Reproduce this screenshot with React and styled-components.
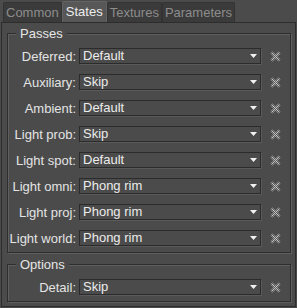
import styled, { createGlobalStyle } from "styled-components";

const Global = createGlobalStyle`
  html, body {
    margin: 0;
    padding: 0;
    background: #4b4b4b;
  }
  body {
    font-family: "Liberation Sans", Arial, sans-serif;
    font-size: 13px;
    color: #e6e6e6;
  }
`;

const passes = [
  ["Deferred:", "Default"],
  ["Auxiliary:", "Skip"],
  ["Ambient:", "Default"],
  ["Light prob:", "Skip"],
  ["Light spot:", "Default"],
  ["Light omni:", "Phong rim"],
  ["Light proj:", "Phong rim"],
  ["Light world:", "Phong rim"],
];

const tabs = ["Common", "States", "Textures", "Parameters"];

function ClearIcon() {
  return (
    <ClearBtn>
      <svg width="11" height="11" viewBox="0 0 11 11">
        <defs>
          <pattern id="chk" width="2" height="2" patternUnits="userSpaceOnUse">
            <rect width="2" height="2" fill="#5e5e5e" />
            <rect width="1" height="1" fill="#c4c4c4" />
            <rect x="1" y="1" width="1" height="1" fill="#c4c4c4" />
          </pattern>
        </defs>
        <path d="M1.5 1.5L9.5 9.5M9.5 1.5L1.5 9.5" stroke="url(#chk)" strokeWidth="2.6" />
      </svg>
    </ClearBtn>
  );
}

function Combo({ value }) {
  return (
    <ComboBox>
      <span>{value}</span>
      <svg width="7" height="4" viewBox="0 0 7 4">
        <path d="M0 0h7L3.5 4z" fill="#f2f2f2" />
      </svg>
    </ComboBox>
  );
}

export default function App() {
  return (
    <Window>
      <Global />
      <TabBar>
        {tabs.map((t) => (
          <Tab key={t} $active={t === "States"}>
            {t}
          </Tab>
        ))}
      </TabBar>
      <Panel>
        <Group>
          <GroupTitle>Passes</GroupTitle>
          <Rows>
            {passes.map(([label, value]) => (
              <Row key={label}>
                <Label>{label}</Label>
                <Combo value={value} />
                <ClearIcon />
              </Row>
            ))}
          </Rows>
        </Group>
        <Group>
          <GroupTitle>Options</GroupTitle>
          <Rows>
            <Row>
              <Label>Detail:</Label>
              <Combo value="Skip" />
              <ClearIcon />
            </Row>
          </Rows>
        </Group>
      </Panel>
    </Window>
  );
}

const Window = styled.div`
  width: 297px;
  height: 308px;
  background: #4b4b4b;
  overflow: hidden;
`;

const TabBar = styled.div`
  display: flex;
  align-items: flex-end;
  height: 22px;
  padding-left: 3px;
`;

const Tab = styled.div`
  box-sizing: border-box;
  height: ${(p) => (p.$active ? "21px" : "20px")};
  line-height: 19px;
  padding: 0 2px;
  min-width: 45px;
  text-align: center;
  border-radius: 2px 2px 0 0;
  background: ${(p) => (p.$active ? "#575757" : "#3b3b3b")};
  color: ${(p) => (p.$active ? "#ededed" : "#8d8d8d")};
  border: 1px solid ${(p) => (p.$active ? "#646464" : "#333333")};
  border-bottom: none;
`;

const Panel = styled.div`
  box-sizing: border-box;
  height: 285px;
  margin: 0 1px;
  border: 1px solid #2d2d2d;
  padding: 10px 4px 0 5px;
  display: flex;
  flex-direction: column;
  gap: 11px;
`;

const Group = styled.div`
  position: relative;
  border: 1px solid #2e2e2e;
  box-shadow: inset 1px 1px 0 #5f5f5f, 1px 1px 0 #5f5f5f;
  padding: 14px 0 6px 0;
`;

const GroupTitle = styled.span`
  position: absolute;
  top: -8px;
  left: 8px;
  padding: 0 4px;
  line-height: 15px;
  background: #4b4b4b;
  color: #e6e6e6;
`;

const Rows = styled.div`
  display: flex;
  flex-direction: column;
  gap: 10px;
`;

const Row = styled.div`
  display: grid;
  grid-template-columns: 68px 182px 1fr;
  column-gap: 3px;
  align-items: center;
  height: 16px;
`;

const Label = styled.div`
  text-align: right;
  white-space: nowrap;
  color: #e4e4e4;
`;

const ComboBox = styled.div`
  box-sizing: border-box;
  height: 16px;
  border: 1px solid #2b2b2b;
  box-shadow: 1px 1px 0 #5a5a5a;
  background: #4b4b4b;
  display: flex;
  align-items: center;
  justify-content: space-between;
  padding: 0 3px 0 3px;
  line-height: 14px;
  color: #ececec;

  svg {
    flex: none;
  }
`;

const ClearBtn = styled.div`
  display: flex;
  align-items: center;
  justify-content: center;
  padding-right: 4px;
`;
